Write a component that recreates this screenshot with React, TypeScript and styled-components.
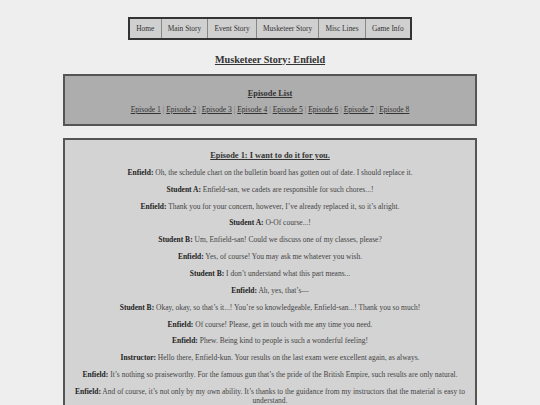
import React from 'react';
import styled, { createGlobalStyle } from 'styled-components';

const GlobalStyle = createGlobalStyle`
  html, body {
    margin: 0;
    padding: 0;
    background: #eeeeee;
  }
  body {
    font-family: "Liberation Serif", "Times New Roman", serif;
    font-size: 7.4px;
    color: #444;
  }
`;

const Page = styled.div`
  padding: 17px 0 20px;
`;

const NavBar = styled.nav`
  display: flex;
  justify-content: center;
`;

const NavList = styled.ul`
  display: flex;
  list-style: none;
  margin: 0;
  padding: 0;
  border: 2px solid #333;
  background: #d0d0d0;
`;

const NavItem = styled.li<{ first?: boolean }>`
  padding: 5.5px 6.2px;
  line-height: 8px;
  border-left: ${props => (props.first ? 'none' : '1px solid #888')};
  color: #333;
`;

const Title = styled.h2`
  margin: 14px 0 8px;
  text-align: center;
  font-size: 10.2px;
  line-height: 11.7px;
  text-decoration: underline;
  color: #333;
`;

const Panel = styled.section<{ tone: string; top: number }>`
  width: 414px;
  box-sizing: border-box;
  margin: 0 auto 12px;
  padding: ${props => props.top}px 8px 0;
  background: ${props => props.tone};
  border: 2px solid #555;
  text-align: center;
  display: flow-root;
`;

const PanelHeading = styled.h3`
  font-size: 8.4px;
  line-height: 9px;
  margin: 0;
  text-decoration: underline;
  color: #333;
`;

const EpisodeLinks = styled.p`
  margin: 6.4px 0 10px;
  line-height: 9.2px;
  font-size: 7.6px;
  color: #777;
`;

const EpisodeLink = styled.a`
  color: #333;
  text-decoration: underline;
`;

const Line = styled.p`
  margin: 7.65px 0;
  line-height: 9.2px;
  font-size: 7.5px;
`;

const Speaker = styled.b`
  color: #222;
`;

const navItems = ['Home', 'Main Story', 'Event Story', 'Musketeer Story', 'Misc Lines', 'Game Info'];

const dialogue: [string, string][] = [
  ['Enfield', 'Oh, the schedule chart on the bulletin board has gotten out of date. I should replace it.'],
  ['Student A', 'Enfield-san, we cadets are responsible for such chores...!'],
  ['Enfield', 'Thank you for your concern, however, I\u2019ve already replaced it, so it\u2019s alright.'],
  ['Student A', 'O-Of course...!'],
  ['Student B', 'Um, Enfield-san! Could we discuss one of my classes, please?'],
  ['Enfield', 'Yes, of course! You may ask me whatever you wish.'],
  ['Student B', 'I don\u2019t understand what this part means...'],
  ['Enfield', 'Ah, yes, that\u2019s\u2014'],
  ['Student B', 'Okay, okay, so that\u2019s it...! You\u2019re so knowledgeable, Enfield-san...! Thank you so much!'],
  ['Enfield', 'Of course! Please, get in touch with me any time you need.'],
  ['Enfield', 'Phew. Being kind to people is such a wonderful feeling!'],
  ['Instructor', 'Hello there, Enfield-kun. Your results on the last exam were excellent again, as always.'],
  ['Enfield', 'It\u2019s nothing so praiseworthy. For the famous gun that\u2019s the pride of the British Empire, such results are only natural.'],
  ['Enfield', 'And of course, it\u2019s not only by my own ability. It\u2019s thanks to the guidance from my instructors that the material is easy to understand.'],
];

const App = () => {
  const episodes = [1, 2, 3, 4, 5, 6, 7, 8];

  return (
    <Page>
      <GlobalStyle />
      <NavBar>
        <NavList>
          {navItems.map((item, i) => (
            <NavItem key={item} first={i === 0}>{item}</NavItem>
          ))}
        </NavList>
      </NavBar>

      <Title>Musketeer Story: Enfield</Title>

      <Panel tone="#adadad" top={13.5}>
        <PanelHeading>Episode List</PanelHeading>
        <EpisodeLinks>
          {episodes.map((n, i) => (
            <React.Fragment key={n}>
              {i > 0 && ' | '}
              <EpisodeLink href={`#ep${n}`}>Episode {n}</EpisodeLink>
            </React.Fragment>
          ))}
        </EpisodeLinks>
      </Panel>

      <Panel tone="#d3d3d3" top={11.5}>
        <PanelHeading>Episode 1: I want to do it for you.</PanelHeading>
        {dialogue.map(([who, text], i) => (
          <Line key={i}>
            <Speaker>{who}:</Speaker> {text}
          </Line>
        ))}
      </Panel>
    </Page>
  );
};

export default App;
